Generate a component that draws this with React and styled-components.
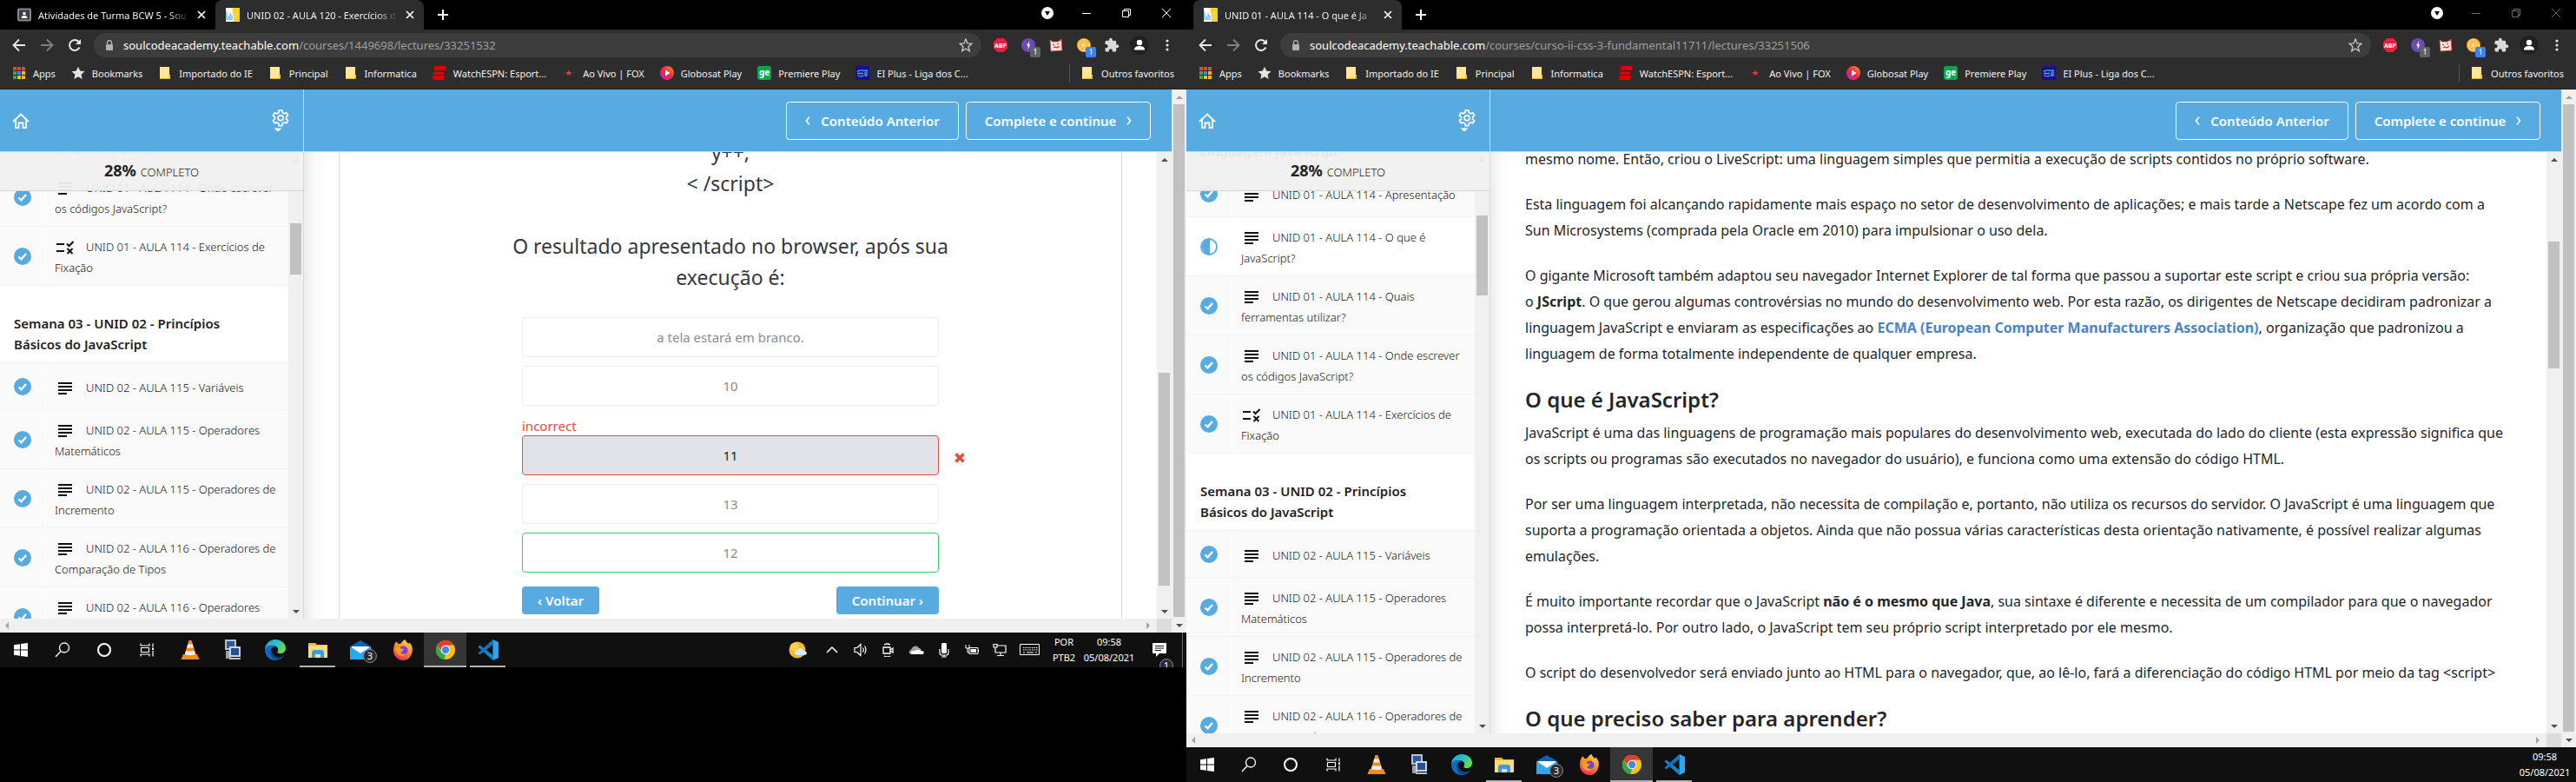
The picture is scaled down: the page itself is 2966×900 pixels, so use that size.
import React from 'react';
import styled, { createGlobalStyle, css } from 'styled-components';

const Global = createGlobalStyle`
  * { box-sizing: border-box; }
  html, body { margin: 0; background: #000; }
  body { font-family: "Noto Sans", "Open Sans", sans-serif; color: #222; }
  button { font-family: inherit; cursor: pointer; }
  a { text-decoration: none; color: inherit; }
  svg { display: block; flex: none; }
`;

/* ---------- desktop and windows ---------- */

const Desktop = styled.main`
  display: grid;
  grid-template-columns: 1366fr 1600fr;
  height: 100vh;
  overflow: hidden;
`;

const Monitor = styled.section`
  display: grid;
  grid-template-rows: ${p => (p.$short ? '64fr 11fr' : '1fr')};
  min-width: 0;
  min-height: 0;
`;

const Screen = styled.div`
  display: flex;
  flex-direction: column;
  min-width: 0;
  min-height: 0;
  overflow: hidden;
`;

const TabStrip = styled.div`
  display: flex;
  align-items: stretch;
  height: 34px;
  flex: none;
  padding-left: 8px;
  background: #000;
`;

const Tab = styled.div`
  display: flex;
  align-items: center;
  gap: 8px;
  width: 240px;
  padding: 0 10px 0 12px;
  border-radius: 8px 8px 0 0;
  color: #f1f1f1;
  font-size: 11px;
  background: ${p => (p.$active ? '#2d2d2d' : 'transparent')};
`;

const TabTitle = styled.span`
  flex: 1;
  overflow: hidden;
  white-space: nowrap;
  mask-image: linear-gradient(90deg, #000 86%, transparent);
`;

const IconButton = styled.button`
  display: grid;
  place-items: center;
  width: ${p => p.$w || 32}px;
  height: ${p => p.$h || 28}px;
  padding: 0;
  border: 0;
  flex: none;
  background: transparent;
  color: ${p => p.$color || '#e8e8e8'};
  position: relative;
`;

const NewTab = styled(IconButton)`
  align-self: center;
  margin-left: 6px;
`;

const WindowControls = styled.div`
  display: flex;
  align-items: center;
  margin-left: auto;
  height: 30px;
  color: ${p => (p.$dim ? '#6a6a6a' : '#fff')};
`;

const Toolbar = styled.div`
  display: flex;
  align-items: center;
  height: 34px;
  flex: none;
  padding: 4px 6px 2px;
  background: #2d2d2d;
`;

const AddressBar = styled.div`
  display: flex;
  align-items: center;
  flex: 1;
  height: 28px;
  margin: 0 6px;
  padding: 0 10px 0 12px;
  border-radius: 14px;
  background: #3d3d3d;
`;

const Url = styled.a`
  flex: 1;
  margin-left: 10px;
  font-size: 13px;
  white-space: nowrap;
  color: #9f9f9f;
  b { font-weight: 400; color: #fff; }
`;

const Count = styled.span`
  position: absolute;
  right: 2px;
  bottom: 0;
  width: 12px;
  height: 12px;
  border-radius: 2px;
  font-size: 9px;
  line-height: 12px;
  text-align: center;
  color: #fff;
  background: ${p => p.$color};
`;

const Bookmarks = styled.nav`
  display: flex;
  align-items: center;
  gap: 18px;
  height: 35px;
  flex: none;
  padding: 0 14px 2px;
  border-bottom: 1px solid #232323;
  background: #2d2d2d;
  color: #f1f1f1;
  font-size: 11px;
`;

const Bookmark = styled.a`
  display: flex;
  align-items: center;
  gap: 8px;
  white-space: nowrap;
  ${p => p.$last && css`
    margin-left: auto;
    padding-left: 12px;
    border-left: 1px solid #555;
    line-height: 21px;
  `}
`;

/* ---------- page ---------- */

const Viewport = styled.div`
  display: flex;
  flex: 1;
  min-height: 0;
  background: #fff;
`;

const PageColumn = styled.div`
  display: flex;
  flex-direction: column;
  flex: 1;
  min-width: 0;
`;

const Header = styled.header`
  display: flex;
  height: 72px;
  flex: none;
  background: #58abe1;
  border-bottom: 1px solid #d3d8dc;
`;

const HeaderSide = styled.div`
  display: flex;
  align-items: center;
  justify-content: space-between;
  width: 350px;
  padding: 0 16px 0 8px;
  border-right: 1px solid #cfdde6;
`;

const HeaderActions = styled.div`
  display: flex;
  flex: 1;
  align-items: center;
  justify-content: flex-end;
  gap: 8px;
  padding-right: 24px;
`;

const OutlineButton = styled.button`
  display: flex;
  align-items: center;
  justify-content: center;
  gap: 12px;
  width: ${p => p.$w}px;
  height: 44px;
  padding: 0;
  border: 1px solid #fff;
  border-radius: 4px;
  background: transparent;
  color: #fff;
  font-size: 15px;
  font-weight: 600;
`;

const Body = styled.div`
  display: flex;
  flex: 1;
  min-height: 0;
`;

const Sidebar = styled.aside`
  position: relative;
  display: flex;
  width: 350px;
  flex: none;
  overflow: hidden;
  border-right: 1px solid #d8dada;
`;

const Progress = styled.div`
  position: absolute;
  inset: 0 0 auto;
  display: flex;
  align-items: baseline;
  justify-content: center;
  gap: 5px;
  height: 45px;
  padding-top: 9px;
  border-bottom: 1px solid #d3d6d6;
  background: rgba(240, 240, 240, 0.95);
  font-size: 13px;
  font-weight: 300;
  b { font-size: 18px; font-weight: 700; }
`;

const Lessons = styled.ul`
  flex: 1;
  margin: 0;
  padding: 0;
  list-style: none;
  overflow: hidden;
`;

const Scrolled = styled.div`
  margin-top: -${p => p.$by}px;
`;

const Lesson = styled.li`
  display: flex;
  align-items: stretch;
  min-height: 54px;
  border-bottom: 1px solid #e9f4fb;
  background: ${p => (p.$current ? '#fff' : '#fafafa')};
`;

const Status = styled.span`
  display: grid;
  place-items: center;
  width: 53px;
  flex: none;
  padding-top: 1px;
  border-right: 1px solid #fff;
`;

const LessonLink = styled.a`
  align-self: center;
  padding: 11px 0 8px 10px;
  color: #151515;
  font-size: 13px;
  font-weight: 300;
  line-height: 24px;
  white-space: nowrap;
  svg {
    display: inline-block;
    margin: 0 14px 0 2px;
    vertical-align: -4px;
  }
`;

const SectionTitle = styled.li`
  padding: 31px 16px 9px;
  border-bottom: 1px solid #e9f4fb;
  background: #fff;
  font-size: 15px;
  font-weight: 600;
  line-height: 24px;
  white-space: nowrap;
`;

const Content = styled.div`
  flex: 1;
  min-width: 0;
  overflow: hidden;
  padding-left: 40px;
  padding-right: ${p => p.$right || 20}px;
  background: linear-gradient(90deg, #ececec, #fafafa 12px, #fff 24px);
`;

/* ---------- scroll bars ---------- */

const Track = styled.div`
  display: grid;
  width: 17px;
  flex: none;
  grid-template-rows: 17px ${p => p.$before}fr ${p => p.$thumb}fr ${p => p.$after}fr 17px;
  justify-items: center;
  align-items: center;
  background: #f0f0f0;
`;

const Thumb = styled.span`
  grid-row: 3;
  width: 13px;
  height: 100%;
  background: #c1c1c1;
`;

const Down = styled.span`
  grid-row: 5;
`;

const HTrack = styled.div`
  display: flex;
  align-items: center;
  justify-content: space-between;
  height: 16px;
  flex: none;
  padding-left: 4px;
  background: #f0f0f0;
`;

const HEnd = styled.div`
  display: flex;
  align-items: center;
  gap: 6px;
  height: 100%;
`;

const Corner = styled.span`
  width: 17px;
  height: 100%;
  background: #dcdcdc;
`;

/* ---------- quiz ---------- */

const Panel = styled.div`
  height: 100%;
  overflow: hidden;
  border: solid #d8d8d8;
  border-width: 0 1px;
`;

const Quiz = styled.form`
  display: flex;
  flex-direction: column;
  align-items: center;
  margin-top: -18px;
`;

const Question = styled.p`
  margin: 0 0 28px;
  font-size: 23px;
  line-height: 36px;
  text-align: center;
  color: #36393d;
  white-space: nowrap;
`;

const Options = styled.div`
  display: flex;
  flex-direction: column;
  width: 480px;
  gap: 10px;
`;

const OptionRow = styled.div`
  position: relative;
`;

const Verdict = styled.div`
  color: #e74c3c;
  font-size: 15px;
  line-height: 18px;
  padding: 4px 0 2px;
`;

const Option = styled.button`
  display: block;
  width: 100%;
  height: 46px;
  border: 1px solid ${p => ({ wrong: '#e74c3c', right: '#2ecc71' }[p.$state] || '#ececec')};
  border-radius: 4px;
  background: ${p => (p.$state === 'wrong' ? '#e2e3e8' : '#fff')};
  color: ${p => (p.$state === 'wrong' ? '#222' : '#8b8b8b')};
  font-size: 15px;
`;

const Cross = styled.svg`
  position: absolute;
  left: 498px;
  bottom: 14px;
`;

const QuizNav = styled.div`
  display: flex;
  justify-content: space-between;
  width: 480px;
  margin-top: 16px;
`;

const Solid = styled.button`
  height: 32px;
  padding: 0 18px;
  border: 0;
  border-radius: 4px;
  background: #58abe1;
  color: #fff;
  font-size: 15px;
  font-weight: 600;
`;

/* ---------- article ---------- */

const Article = styled.article`
  margin-top: -7px;
  font-size: 16px;
  line-height: 30px;
  color: #22262b;
  white-space: nowrap;
  p { margin: 0 0 22px; }
  h2 { margin: 0 0 8px; font-size: 24px; line-height: 31px; font-weight: 600; }
  a { color: #4a83c9; font-weight: 700; }
`;

/* ---------- taskbar ---------- */

const Taskbar = styled.footer`
  display: flex;
  align-items: stretch;
  height: 40px;
  flex: none;
  background: #101010;
  color: #fff;
`;

const TaskButton = styled.button`
  position: relative;
  display: grid;
  place-items: center;
  width: ${p => p.$w || 49}px;
  padding: 0;
  border: 0;
  background: ${p => (p.$active ? '#363636' : 'transparent')};
  ${p => p.$open && css`
    &::after {
      content: "";
      position: absolute;
      bottom: 0;
      left: ${p.$active ? 0 : 4}px;
      right: ${p.$active ? 0 : 4}px;
      height: 2px;
      background: #b4b4b4;
    }
  `}
`;

const Badge = styled.span`
  position: absolute;
  left: ${p => p.$left || 28}px;
  top: 19px;
  width: 16px;
  height: 16px;
  border: 1px solid #888;
  border-radius: 50%;
  background: #2b2b2b;
  color: #fff;
  font-size: 11px;
  line-height: 14px;
  text-align: center;
`;

const Tray = styled.div`
  display: flex;
  align-items: center;
  margin-left: auto;
`;

const TrayText = styled.time`
  width: ${p => p.$w}px;
  font-size: 11px;
  line-height: 18px;
  text-align: center;
`;

const ShowDesktop = styled.span`
  width: 5px;
  height: 40px;
  border-left: 1px solid #6b6b6b;
`;

/* ---------- icons ---------- */

const Arrow = ({ dir, dim }) => (
  <svg width="8" height="8" viewBox="0 0 8 8" fill={dim ? '#a3a3a3' : '#505050'}>
    <path d={{ up: 'M4 2l4 4H0z', down: 'M4 6L0 2h8z', left: 'M2 4l4-4v8z', right: 'M6 4L2 0v8z' }[dir]} />
  </svg>
);

const Line = ({ size = 16, d, w = 1.5, box = 16, color = 'currentColor' }) => (
  <svg width={size} height={size} viewBox={`0 0 ${box} ${box}`} fill="none" stroke={color} strokeWidth={w}>
    <path d={d} />
  </svg>
);

const SchoolIcon = () => (
  <svg width="16" height="16" viewBox="0 0 16 16">
    <rect width="16" height="16" fill="#fff" />
    <path d="M0 4c1-1 2 1 2 4s1 3 2 0 1-4 2-1 1 2 2 0v7H0z" fill="#8fd0ec" />
    <path d="M8 0h8v16H9c-1-3 1-5 0-8s-2-5-1-8z" fill="#fcd116" />
    <path d="M10 5h4M10 8h4M10 11h4" stroke="#f2e08a" />
  </svg>
);

const ClassIcon = () => (
  <svg width="16" height="16" viewBox="0 0 16 16">
    <rect x="2" y="2" width="12" height="12" rx="1" fill="#3a3d42" />
    <rect x="1" y="1.500" width="14" height="13" rx="1" fill="none" stroke="#85888d" strokeWidth="2" />
    <circle cx="8" cy="6.500" r="1.800" fill="#fff" />
    <path d="M4.500 12c0-2.500 2-3 3.500-3s3.500.5 3.500 3z" fill="#fff" />
  </svg>
);

const UpdateIcon = () => (
  <svg width="16" height="16" viewBox="0 0 16 16">
    <circle cx="8" cy="8" r="7" fill="#fff" />
    <path d="M5 6h6l-3 5z" fill="#000" />
  </svg>
);

const Folder = () => (
  <svg width="16" height="16" viewBox="0 0 16 16">
    <path d="M2 1h11v14H2z" fill="#ffe599" />
    <path d="M12 10h2v5h-2z" fill="#f2c94c" />
    <path d="M2 14.500h12" stroke="#d9ad3c" />
  </svg>
);

const AppsIcon = () => (
  <svg width="16" height="16" viewBox="0 0 16 16">
    {['#ea4335', '#ea4335', '#ea4335', '#34a853', '#4285f4', '#fbbc05', '#34a853', '#fbbc05', '#fbbc05'].map((c, i) => (
      <rect key={i} x={1 + (i % 3) * 5} y={1 + Math.floor(i / 3) * 5} width="4" height="4" fill={c} />
    ))}
  </svg>
);

const StarIcon = () => (
  <svg width="16" height="16" viewBox="0 0 24 24" fill="#e4e4e4">
    <path d="M12 1l3.300 7.400 8 .8-6 5.400 1.700 8L12 18.500l-7 4.100 1.700-8-6-5.400 8-.8z" />
  </svg>
);

const EspnIcon = () => (
  <svg width="16" height="16" viewBox="0 0 16 16" fill="#d00">
    <path d="M2 0h13.500l-.7 5H1.300zM1.200 6.500H9l4.500 1-.6 2.500H.8zM.6 11h13.300l-.8 5H0z" />
  </svg>
);

const FoxIcon = () => (
  <svg width="16" height="16" viewBox="0 0 16 16">
    <path d="M1 8h14" stroke="#34344e" strokeWidth="2" strokeDasharray="2 1" />
    <path d="M8 4.500l1 2.500h2.500l-2 1.500.8 2.500L8 9.500 5.700 11l.8-2.500-2-1.500H7z" fill="#e8402c" />
  </svg>
);

const GloboIcon = () => (
  <svg width="16" height="16" viewBox="0 0 16 16">
    <defs>
      <linearGradient id="globo" x1="0" y1="1" x2="1" y2="0">
        <stop offset="0" stopColor="#c81bd8" />
        <stop offset=".5" stopColor="#f5263c" />
        <stop offset="1" stopColor="#ff9a1f" />
      </linearGradient>
    </defs>
    <circle cx="8" cy="8" r="8" fill="url(#globo)" />
    <path d="M6 4.500v7L11.500 8z" fill="#fff" />
  </svg>
);

const SquareMark = styled.span`
  width: 16px;
  height: 16px;
  border-radius: 3px;
  background: #0aa648;
  color: #fff;
  font-size: 10px;
  font-weight: 700;
  line-height: 14px;
  text-align: center;
`;

const EiIcon = () => (
  <svg width="16" height="16" viewBox="0 0 16 16">
    <rect width="16" height="16" fill="#210a8c" />
    <path d="M2 6.500c2-2 6-2 8-1M2 8.500h7M2.500 10.500c2 1.500 5 1.500 7 .5M9 5.500l4-.5v6h-2V7" stroke="#35b8d8" strokeWidth="1.300" fill="none" />
  </svg>
);

const AbpIcon = () => (
  <svg width="18" height="18" viewBox="0 0 18 18">
    <path d="M5.500 1h7L17 5.500v7L12.500 17h-7L1 12.500v-7z" fill="#ee1d3f" />
    <text x="9" y="11.500" textAnchor="middle" fontSize="7" fontWeight="700" fill="#fff">ABP</text>
  </svg>
);

const FlashIcon = () => (
  <svg width="18" height="18" viewBox="0 0 18 18">
    <circle cx="9" cy="9" r="8" fill="#6b4bb0" />
    <path d="M10.500 4L7 9.500h2L8 14l3.500-5.500h-2z" fill="#fff" />
  </svg>
);

const CatIcon = () => (
  <svg width="18" height="18" viewBox="0 0 18 18">
    <path d="M2 3l3 2h6l4-3 1 13-13 1z" fill="#f6ece6" stroke="#d9473b" />
    <path d="M5 8l2 1M10 8l2-1M6 12l2-1 2 1 3-2M13 4l2-2" stroke="#c9302c" fill="none" strokeWidth="1.300" />
  </svg>
);

const OrangeIcon = () => (
  <svg width="18" height="18" viewBox="0 0 18 18">
    <circle cx="9" cy="9" r="8" fill="#f59a1b" />
    <circle cx="9" cy="9" r="6.500" fill="#ffb52e" stroke="#ffe2a0" />
    <path d="M9 3v12M3 9h12M5 5l8 8M13 5l-8 8" stroke="#ffe2a0" />
  </svg>
);

const PuzzleIcon = () => (
  <svg width="18" height="18" viewBox="0 0 24 24" fill="#dadada">
    <path d="M20.500 11H19V7a2 2 0 0 0-2-2h-4V3.500a2.500 2.500 0 0 0-5 0V5H4a2 2 0 0 0-2 2v3.800h1.500a2.700 2.700 0 0 1 0 5.400H2V20a2 2 0 0 0 2 2h3.800v-1.500a2.700 2.700 0 0 1 5.400 0V22H17a2 2 0 0 0 2-2v-4h1.500a2.500 2.500 0 0 0 0-5z" />
  </svg>
);

const AvatarIcon = () => (
  <svg width="22" height="22" viewBox="0 0 22 22">
    <circle cx="11" cy="11" r="11" fill="#202124" />
    <circle cx="11" cy="8" r="3.200" fill="#fff" />
    <path d="M5 16.500c0-3.500 3-4.500 6-4.500s6 1 6 4.500z" fill="#fff" />
  </svg>
);

const DotsIcon = () => (
  <svg width="16" height="16" viewBox="0 0 16 16" fill="#e0e0e0">
    <circle cx="8" cy="3" r="1.600" /><circle cx="8" cy="8" r="1.600" /><circle cx="8" cy="13" r="1.600" />
  </svg>
);

const LockIcon = () => (
  <svg width="12" height="12" viewBox="0 0 12 12">
    <rect x="2" y="5" width="8" height="7" rx="1" fill="#b0b2b6" />
    <path d="M3.500 5V3a2.500 2.500 0 0 1 5 0v2" fill="none" stroke="#b0b2b6" strokeWidth="1.300" />
  </svg>
);

const HomeIcon = () => (
  <svg width="20" height="20" viewBox="0 0 20 20" fill="none" stroke="#fff" strokeWidth="1.800">
    <path d="M1 11l9-8.500 9 8.500M4 9v9h3.500v-5.500h5V18H16V9" />
  </svg>
);

const GearIcon = () => (
  <svg width="20" height="28" viewBox="0 0 20 28" fill="none" stroke="#fff" strokeWidth="1.700">
    <path d="M8.200 1h3.600l.5 2.600 2 1.100 2.500-.9 1.800 3-2 1.800v2.400l2 1.800-1.800 3-2.500-.9-2 1.100-.5 2.600H8.200L7.700 16l-2-1.100-2.500.9-1.800-3 2-1.800V8.600l-2-1.800 1.800-3 2.500.9 2-1.100z" transform="translate(0 1)" />
    <circle cx="10" cy="10.800" r="3" />
    <path d="M2.500 22.500h9L7 26.500z" fill="#fff" stroke="none" />
  </svg>
);

const CheckIcon = () => (
  <svg width="20" height="20" viewBox="0 0 20 20">
    <circle cx="10" cy="10" r="10" fill="#58abe1" />
    <path d="M5.500 10.500l3 2.800 5.500-6.300" fill="none" stroke="#fff" strokeWidth="2.300" />
  </svg>
);

const HalfIcon = () => (
  <svg width="20" height="20" viewBox="0 0 20 20">
    <circle cx="10" cy="10" r="9" fill="#fff" stroke="#58abe1" strokeWidth="1.800" />
    <path d="M11 1v18A9 9 0 1 1 11 1z" fill="#58abe1" />
  </svg>
);

const TextIcon = () => (
  <svg width="20" height="16" viewBox="0 0 20 16" fill="#111">
    <path d="M2 1h16v2H2zM2 5h16v2H2zM2 9h16v2H2zM2 13h10v2H2z" />
  </svg>
);

const QuizIcon = () => (
  <svg width="20" height="16" viewBox="0 0 20 16" fill="none" stroke="#111" strokeWidth="2">
    <path d="M0 4h9M0 12h9M12 3.500l2.500 2.500L19.500 1M12.500 9l6 6M18.500 9l-6 6" />
  </svg>
);

const Chevron = ({ dir }) => (
  <svg width="6" height="12" viewBox="0 0 6 12" fill="none" stroke="#fff" strokeWidth="1.600">
    <path d={dir === 'left' ? 'M5 1.500L1.500 6 5 10.500' : 'M1 1.500L4.500 6 1 10.500'} />
  </svg>
);

const StartIcon = () => (
  <svg width="16" height="16" viewBox="0 0 16 16" fill="#fff">
    <path d="M0 2.200L7 1.200v6.300H0zM8 1l8-1v7.500H8zM0 8.500h7v6.300l-7-1zM8 8.500h8V16l-8-1z" />
  </svg>
);

const TaskViewIcon = () => (
  <svg width="17" height="16" viewBox="0 0 17 16" fill="none" stroke="#fff" strokeWidth="1.200">
    <path d="M1 .5V3h10V.5M1 15.500V13h10v2.500M1.500 5.500h9v5h-9zM15 .5v4M15 9v6.500" />
    <path d="M14 5.500h2v2.500h-2z" fill="#fff" stroke="none" />
  </svg>
);

const VlcIcon = () => (
  <svg width="22" height="24" viewBox="0 0 22 24">
    <path d="M3 17h16l2.500 6H.5z" fill="#f28a13" />
    <path d="M9.500 1h3L18 19c-3 2-11 2-14 0z" fill="#f58a1f" />
    <path d="M8.300 5.500h5.400l1.200 4H7.100zM5.900 13.500h10.200l1 3.500c-3 1.500-9 1.500-12.200 0z" fill="#f1f1f1" />
  </svg>
);

const RemoteIcon = () => (
  <svg width="22" height="24" viewBox="0 0 22 24">
    <path d="M2 0h13v12H2z" fill="#b9c2cc" /><path d="M4 2h9v8H4z" fill="#2b57a5" />
    <path d="M3 13h6v9H3z" fill="#9aa1a8" /><path d="M7 8h13v12H7z" fill="#d0d5da" />
    <path d="M9 10h9v8H9z" fill="#274f98" /><path d="M7 21h13v2H7z" fill="#b9bec4" />
  </svg>
);

const EdgeIcon = () => (
  <svg width="24" height="24" viewBox="0 0 24 24">
    <defs>
      <linearGradient id="edge" x1="0" y1="0" x2="1" y2=".4">
        <stop offset="0" stopColor="#1fa2dc" /><stop offset=".6" stopColor="#2ac3c9" /><stop offset="1" stopColor="#66d94f" />
      </linearGradient>
    </defs>
    <path d="M0 12C0 5 5.500 0 12 0s12 4.500 12 10c0 4-3 6-6 6-2.500 0-3.700-.8-3.700-1.600 0-.7.900-1 .9-2.900 0-2-1.900-4.500-6-4.500C4 7 1 9.500 0 12z" fill="url(#edge)" />
    <path d="M0 12c1-3.500 4-5.200 7.500-5.200 2 0 4 .7 5 1.700C8 8 6.500 11.500 6.500 14c0 5 4 8.500 9 8.500C14.500 23.500 13 24 12 24 5 24 0 18.500 0 12z" fill="#0c6cc4" />
    <path d="M8.500 12c-1 5 3 9 8 8.500 2.500-.2 4.500-1.500 5.500-2.500-1 3-4 5-6.500 5.500-5.500.5-9.500-3.500-9-8 .2-2 1-3 2-3.500z" fill="#114a8b" />
  </svg>
);

const ExplorerIcon = () => (
  <svg width="22" height="20" viewBox="0 0 22 20">
    <path d="M0 2h8l2 2h12v15H0z" fill="#f5b82e" /><path d="M0 5h22v14H0z" fill="#ffdc73" />
    <path d="M4 19v-7l2-2h10l2 2v7h-4v-4H8v4z" fill="#3d9be0" /><path d="M8 15h6v2H8z" fill="#cfe8fa" />
  </svg>
);

const MailIcon = () => (
  <svg width="24" height="24" viewBox="0 0 24 24">
    <path d="M0 8l12-7 12 7v15H0z" fill="#0f62b0" /><path d="M2 8h20v8H2z" fill="#f4f4f4" />
    <path d="M0 8l12 8 12-8v15H0z" fill="#2ba9ee" /><path d="M2.500 8h19L12 15z" fill="#fff" />
  </svg>
);

const FirefoxIcon = () => (
  <svg width="24" height="24" viewBox="0 0 24 24">
    <defs>
      <linearGradient id="fox" x1=".8" y1="0" x2=".3" y2="1">
        <stop offset="0" stopColor="#ffde45" /><stop offset=".5" stopColor="#ff8a1f" /><stop offset="1" stopColor="#f0285a" />
      </linearGradient>
    </defs>
    <path d="M2.500 5C3 4 3.500 3 4.500 2.500L6.500 5c2 0 3-.5 4-1.500 1-2 2.500-3 4-3.500 0 2 2 3 4 5l1-1.500c3 3 4 7 3 11C21 21 17 24 12 24S1 19.500 1 13c0-3 .5-6 1.500-8z" fill="url(#fox)" />
    <circle cx="12.500" cy="12.500" r="5" fill="#7542d8" />
    <path d="M4 9c3-1 5 0 6 2h3c0 2-3 2.500-3.500 4 1 2 4 2.500 6 1-1.500 3-6 4-9 1.500S3.500 12 4 9z" fill="#ff9a26" />
  </svg>
);

const ChromeIcon = () => (
  <svg width="24" height="24" viewBox="0 0 24 24">
    <circle cx="12" cy="12" r="11" fill="#fbc116" />
    <path d="M2.500 6.500L7.300 15 12 17l-1.500 6A11 11 0 0 1 2.500 6.500z" fill="#2da94f" />
    <path d="M2.500 6.500A11 11 0 0 1 21.500 6.500H12a5 5 0 0 0-4.800 6.500z" fill="#e33b2e" />
    <circle cx="12" cy="12" r="5.200" fill="#fff" /><circle cx="12" cy="12" r="4.200" fill="#4285f4" />
  </svg>
);

const CodeIcon = () => (
  <svg width="24" height="24" viewBox="0 0 24 24">
    <path d="M.5 8.500l2-2L17.500 18v6z" fill="#1583d0" />
    <path d="M.5 15.500l2 2L17.500 6V0z" fill="#0f74bd" />
    <path d="M17.500 0L24 3v18l-6.500 3z" fill="#2aa5f2" />
  </svg>
);

const WeatherIcon = () => (
  <svg width="22" height="20" viewBox="0 0 22 20">
    <circle cx="10" cy="10" r="9.500" fill="#fbb829" /><circle cx="7" cy="7" r="5" fill="#fdd04f" />
    <path d="M10 16c-4 0-4-5 0-5 1-4 6-4 7 0 5 0 5 5 1 5z" fill="#d4ecfb" />
  </svg>
);

const CloudIcon = () => (
  <svg width="18" height="12" viewBox="0 0 18 12">
    <path d="M3 11C0 11 0 6 3 6c1-5 8-6 9-2 3 0 3 2 2 7z" fill="#9f9f9f" />
    <path d="M4 11c-2-1-1-4 1-4s3 0 5-1 4 1 5 1c4 0 3 4 1 4z" fill="#fff" />
  </svg>
);

const MicIcon = () => (
  <svg width="14" height="18" viewBox="0 0 14 18">
    <rect x="4" y="1" width="6" height="12" rx="1.500" fill="#fff" />
    <path d="M2 8v4c0 2 1 3 2.500 3h5c1.500 0 2.500-1 2.500-3V8M7 15v2M4 17h6" fill="none" stroke="#fff" strokeWidth="1.200" />
  </svg>
);

const KeyboardIcon = () => (
  <svg width="24" height="14" viewBox="0 0 24 14" fill="none" stroke="#fff">
    <path d="M.5 .5h22v12H.5z" />
    <path d="M4 4.500h17M4 7h17" strokeDasharray="1.500 1" /><path d="M4 10h2M8 10h8M18 10h2" />
  </svg>
);

const NoteIcon = () => (
  <svg width="18" height="18" viewBox="0 0 18 18">
    <path d="M1 1h16v12H9l-4 4v-4H1z" fill="#fff" />
    <path d="M4 4.500h10M4 7h10M4 9.500h7" stroke="#101010" />
  </svg>
);

/* ---------- composed parts ---------- */

const VScroll = ({ before, thumb, after }) => (
  <Track $before={before} $thumb={thumb} $after={after}>
    <Arrow dir="up" dim={!before} />
    <Thumb />
    <Down><Arrow dir="down" /></Down>
  </Track>
);

const bookmarks = [
  ['Apps', AppsIcon], ['Bookmarks', StarIcon], ['Importado do IE', Folder], ['Principal', Folder],
  ['Informatica', Folder], ['WatchESPN: Esport...', EspnIcon], ['Ao Vivo | FOX', FoxIcon],
  ['Globosat Play', GloboIcon], ['Premiere Play', () => <SquareMark>ge</SquareMark>],
  ['EI Plus - Liga dos C...', EiIcon],
];

const BrowserChrome = ({ tabs, path, dim }) => (
  <>
    <TabStrip>
      {tabs.map(t => (
        <Tab key={t.title} $active={t.active}>
          {t.active ? <SchoolIcon /> : <ClassIcon />}
          <TabTitle>{t.title}</TabTitle>
          <IconButton $w={12} $h={16} $color="#fff" aria-label="Fechar guia">
            <Line size={10} box={10} d="M1 1l8 8M9 1L1 9" w={1.700} />
          </IconButton>
        </Tab>
      ))}
      <NewTab aria-label="Nova guia" $color="#fff"><Line size={14} box={14} w={2} d="M7 1v12M1 7h12" /></NewTab>
      <WindowControls $dim={dim}>
        <IconButton $w={44} aria-label="Atualizar"><UpdateIcon /></IconButton>
        <IconButton $w={46} $color="inherit" aria-label="Minimizar"><Line size={10} box={10} w={1} d="M0 5.500h10" /></IconButton>
        <IconButton $w={46} $color="inherit" aria-label="Restaurar"><Line size={10} box={10} w={1} d="M.5 2.500h7v7h-7zM2.500 2.500v-2h7v7h-2" /></IconButton>
        <IconButton $w={46} $color="inherit" aria-label="Fechar"><Line size={10} box={10} w={1} d="M0 0l10 10M10 0L0 10" /></IconButton>
      </WindowControls>
    </TabStrip>
    <Toolbar>
      <IconButton aria-label="Voltar"><Line w={1.800} d="M15 8H2M8 1.500L1.500 8 8 14.500" /></IconButton>
      <IconButton aria-label="Avançar" $color="#808080"><Line w={1.800} d="M1 8h13M8 1.500L14.500 8 8 14.500" /></IconButton>
      <IconButton aria-label="Recarregar">
        <svg width="16" height="16" viewBox="0 0 16 16">
          <path d="M13.500 10.500A6 6 0 1 1 12.500 4" fill="none" stroke="#e8e8e8" strokeWidth="2" />
          <path d="M15 1v6H9z" fill="#e8e8e8" />
        </svg>
      </IconButton>
      <AddressBar>
        <LockIcon />
        <Url href="#"><b>soulcodeacademy.teachable.com</b>{path}</Url>
        <Line d="M8 1l2 5 5 .3-4 3.400 1.300 5.100L8 12l-4.300 2.800L5 9.700 1 6.300 6 6z" w={1.300} color="#c8c8c8" />
      </AddressBar>
      <IconButton aria-label="Adblock Plus"><AbpIcon /></IconButton>
      <IconButton aria-label="Flash"><FlashIcon /><Count $color="#5f6368">1</Count></IconButton>
      <IconButton aria-label="Cat"><CatIcon /></IconButton>
      <IconButton aria-label="Laranja"><OrangeIcon /><Count $color="#3b82f6">1</Count></IconButton>
      <IconButton aria-label="Extensões"><PuzzleIcon /></IconButton>
      <IconButton aria-label="Perfil"><AvatarIcon /></IconButton>
      <IconButton aria-label="Menu"><DotsIcon /></IconButton>
    </Toolbar>
    <Bookmarks>
      {bookmarks.map(([label, Icon]) => <Bookmark key={label} href="#"><Icon />{label}</Bookmark>)}
      <Bookmark href="#" $last><Folder />Outros favoritos</Bookmark>
    </Bookmarks>
  </>
);

const LessonList = ({ items, scrolled }) => (
  <Lessons>
    <Scrolled $by={scrolled}>
      {items.map(({ section, lines, quiz, current }) => {
        const text = lines.map((l, i) => <React.Fragment key={l}>{i > 0 && <br />}{l}</React.Fragment>);
        if (section) return <SectionTitle key={lines.join()}>{text}</SectionTitle>;
        return (
          <Lesson key={lines.join()} $current={current}>
            <Status>{current ? <HalfIcon /> : <CheckIcon />}</Status>
            <LessonLink href="#">{quiz ? <QuizIcon /> : <TextIcon />}{text}</LessonLink>
          </Lesson>
        );
      })}
    </Scrolled>
  </Lessons>
);

const CoursePage = ({ lessons, scrolled, side, inner, outer, children, right }) => (
  <Viewport>
    <PageColumn>
      <Header>
        <HeaderSide>
          <IconButton aria-label="Início"><HomeIcon /></IconButton>
          <IconButton $w={20} aria-label="Configurações"><GearIcon /></IconButton>
        </HeaderSide>
        <HeaderActions>
          <OutlineButton $w={199}><Chevron dir="left" />Conteúdo Anterior</OutlineButton>
          <OutlineButton $w={213}>Complete e continue<Chevron dir="right" /></OutlineButton>
        </HeaderActions>
      </Header>
      <Body>
        <Sidebar>
          <LessonList items={lessons} scrolled={scrolled} />
          <VScroll {...side} />
          <Progress><b>28%</b>COMPLETO</Progress>
        </Sidebar>
        <Content $right={right}>{children}</Content>
        <VScroll {...inner} />
      </Body>
      <HTrack>
        <Arrow dir="left" dim />
        <HEnd><Arrow dir="right" dim /><Corner /></HEnd>
      </HTrack>
    </PageColumn>
    <VScroll {...outer} />
  </Viewport>
);

const apps = [
  ['Iniciar', StartIcon, { $w: 48 }],
  ['Pesquisar', () => <Line size={18} box={18} w={1.300} color="#fff" d="M11 1a5.500 5.500 0 1 1 0 11a5.500 5.500 0 1 1 0-11M7 10.500L1 17" />, { $w: 48 }],
  ['Cortana', () => <Line size={18} box={18} w={2} color="#fff" d="M9 2a7 7 0 1 1 0 14A7 7 0 1 1 9 2" />, { $w: 48 }],
  ['Visão de tarefas', TaskViewIcon, { $w: 50 }],
  ['VLC', VlcIcon], ['Área remota', RemoteIcon], ['Edge', EdgeIcon],
  ['Explorador', ExplorerIcon, { $open: true }], ['Email', MailIcon, { badge: 3 }], ['Firefox', FirefoxIcon],
  ['Chrome', ChromeIcon, { $open: true, $active: true }], ['VS Code', CodeIcon, { $open: true }],
];

const Apps = () => apps.map(([name, Icon, { badge, ...rest } = {}]) => (
  <TaskButton key={name} aria-label={name} {...rest}><Icon />{badge && <Badge>{badge}</Badge>}</TaskButton>
));

const FullTray = () => (
  <Tray>
    <TaskButton $w={40} aria-label="Clima"><WeatherIcon /></TaskButton>
    <TaskButton $w={38} aria-label="Mais"><Line size={14} box={14} w={1.500} color="#fff" d="M1 10l6-6 6 6" /></TaskButton>
    <TaskButton $w={28} aria-label="Volume"><Line size={16} w={1.200} color="#fff" d="M1 5.500h3l4-4v13l-4-4H1zM10.500 5.500q1.500 2.500 0 5M12.500 3.500q3 4.500 0 9" /></TaskButton>
    <TaskButton $w={34} aria-label="Câmera"><Line size={16} w={1.300} color="#fff" d="M3 5h8v7H3zM11 8l3-2v5l-3-2M4 2q4-2 7 0M4 15q4 2 7 0" /></TaskButton>
    <TaskButton $w={32} aria-label="OneDrive"><CloudIcon /></TaskButton>
    <TaskButton $w={32} aria-label="Microfone"><MicIcon /></TaskButton>
    <TaskButton $w={32} aria-label="Bateria">
      <svg width="17" height="14" viewBox="0 0 17 14"><path d="M5 4.500h10v7H5zM15.500 6.500v3M1 1v4h4V1M3 5v5h2" fill="none" stroke="#fff" /><path d="M6.500 6H13v4H6.500z" fill="#fff" /></svg>
    </TaskButton>
    <TaskButton $w={32} aria-label="Rede"><Line size={16} w={1.200} color="#fff" d="M5 3h10v8H3V7M9 11v3M5 14.500h8M1 1.500h4V5H1zM3 5v3" /></TaskButton>
    <TaskButton $w={38} aria-label="Teclado"><KeyboardIcon /></TaskButton>
    <TrayText as="span" $w={40}>POR<br />PTB2</TrayText>
    <TrayText $w={64}>09:58<br />05/08/2021</TrayText>
    <TaskButton $w={52} aria-label="Notificações"><NoteIcon /><Badge $left={26}>1</Badge></TaskButton>
    <ShowDesktop />
  </Tray>
);

/* ---------- data ---------- */

const week3 = [
  { section: true, lines: ['Semana 03 - UNID 02 - Princípios', 'Básicos do JavaScript'] },
  { lines: ['UNID 02 - AULA 115 - Variáveis'] },
  { lines: ['UNID 02 - AULA 115 - Operadores', 'Matemáticos'] },
  { lines: ['UNID 02 - AULA 115 - Operadores de', 'Incremento'] },
  { lines: ['UNID 02 - AULA 116 - Operadores de', 'Comparação de Tipos'] },
  { lines: ['UNID 02 - AULA 116 - Operadores', 'Lógicos'] },
];

const tools = { lines: ['UNID 01 - AULA 114 - Quais', 'ferramentas utilizar?'] };
const where = { lines: ['UNID 01 - AULA 114 - Onde escrever', 'os códigos JavaScript?'] };
const drills = { quiz: true, lines: ['UNID 01 - AULA 114 - Exercícios de', 'Fixação'] };

const leftLessons = [tools, where, drills, ...week3];
const rightLessons = [
  { section: true, lines: ['Linguagem JavaScript'] },
  { lines: ['UNID 01 - AULA 114 - Apresentação'] },
  { current: true, lines: ['UNID 01 - AULA 114 - O que é', 'JavaScript?'] },
  tools, where, drills, ...week3.slice(0, 5),
];

const answers = [
  { label: 'a tela estará em branco.' }, { label: '10' },
  { label: '11', state: 'wrong' }, { label: '13' }, { label: '12', state: 'right' },
];

export default function App() {
  return (
    <>
      <Global />
      <Desktop>
        <Monitor $short>
          <Screen>
            <BrowserChrome
              tabs={[
                { title: 'Atividades de Turma BCW 5 - Sou' },
                { title: 'UNID 02 - AULA 120 - Exercícios d', active: true },
              ]}
              path="/courses/1449698/lectures/33251532"
            />
            <CoursePage
              lessons={leftLessons}
              scrolled={50}
              side={{ before: 65, thumb: 59, after: 379 }}
              inner={{ before: 237, thumb: 245, after: 21 }}
              outer={{ before: 0, thumb: 590, after: 1 }}
              right={40}
            >
              <Panel>
                <Quiz onSubmit={e => e.preventDefault()}>
                  <Question>
                    y++;<br />&lt; /script&gt;<br /><br />
                    O resultado apresentado no browser, após sua<br />execução é:
                  </Question>
                  <Options>
                    {answers.map(a => (
                      <OptionRow key={a.label}>
                        {a.state === 'wrong' && <Verdict>incorrect</Verdict>}
                        <Option type="button" $state={a.state}>{a.label}</Option>
                        {a.state === 'wrong' && (
                          <Cross width="12" height="12" viewBox="0 0 12 12" stroke="#e74c3c" strokeWidth="3.500">
                            <path d="M1.500 1.500l9 9M10.500 1.500l-9 9" />
                          </Cross>
                        )}
                      </OptionRow>
                    ))}
                  </Options>
                  <QuizNav>
                    <Solid type="button">‹ Voltar</Solid>
                    <Solid type="button">Continuar ›</Solid>
                  </QuizNav>
                </Quiz>
              </Panel>
            </CoursePage>
            <Taskbar><Apps /><FullTray /></Taskbar>
          </Screen>
        </Monitor>
        <Monitor>
          <Screen>
            <BrowserChrome
              dim
              tabs={[{ title: 'UNID 01 - AULA 114 - O que é Ja', active: true }]}
              path="/courses/curso-ii-css-3-fundamental11711/lectures/33251506"
            />
            <CoursePage
              lessons={rightLessons}
              scrolled={44}
              side={{ before: 56, thumb: 92, after: 487 }}
              inner={{ before: 86, thumb: 146, after: 403 }}
              outer={{ before: 0, thumb: 722, after: 1 }}
            >
              <Article>
                <p>mesmo nome. Então, criou o LiveScript: uma linguagem simples que permitia a execução de scripts contidos no próprio software.</p>
                <p>
                  Esta linguagem foi alcançando rapidamente mais espaço no setor de desenvolvimento de aplicações; e mais tarde a Netscape fez um acordo com a<br />
                  Sun Microsystems (comprada pela Oracle em 2010) para impulsionar o uso dela.
                </p>
                <p>
                  O gigante Microsoft também adaptou seu navegador Internet Explorer de tal forma que passou a suportar este script e criou sua própria versão:<br />
                  o <b>JScript</b>. O que gerou algumas controvérsias no mundo do desenvolvimento web. Por esta razão, os dirigentes de Netscape decidiram padronizar a<br />
                  linguagem JavaScript e enviaram as especificações ao <a href="#">ECMA (European Computer Manufacturers Association)</a>, organização que padronizou a<br />
                  linguagem de forma totalmente independente de qualquer empresa.
                </p>
                <h2>O que é JavaScript?</h2>
                <p>
                  JavaScript é uma das linguagens de programação mais populares do desenvolvimento web, executada do lado do cliente (esta expressão significa que<br />
                  os scripts ou programas são executados no navegador do usuário), e funciona como uma extensão do código HTML.
                </p>
                <p>
                  Por ser uma linguagem interpretada, não necessita de compilação e, portanto, não utiliza os recursos do servidor. O JavaScript é uma linguagem que<br />
                  suporta a programação orientada a objetos. Ainda que não possua várias características desta orientação nativamente, é possível realizar algumas<br />
                  emulações.
                </p>
                <p>
                  É muito importante recordar que o JavaScript <b>não é o mesmo que Java</b>, sua sintaxe é diferente e necessita de um compilador para que o navegador<br />
                  possa interpretá-lo. Por outro lado, o JavaScript tem seu próprio script interpretado por ele mesmo.
                </p>
                <p>O script do desenvolvedor será enviado junto ao HTML para o navegador, que, ao lê-lo, fará a diferenciação do código HTML por meio da tag &lt;script&gt;</p>
                <h2>O que preciso saber para aprender?</h2>
              </Article>
            </CoursePage>
            <Taskbar>
              <Apps />
              <Tray><TrayText $w={72}>09:58<br />05/08/2021</TrayText></Tray>
            </Taskbar>
          </Screen>
        </Monitor>
      </Desktop>
    </>
  );
}
